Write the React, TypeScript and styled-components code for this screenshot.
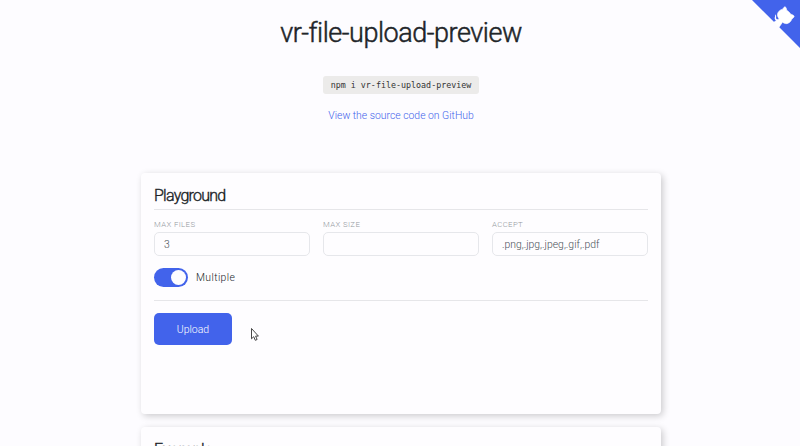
import React, { useState } from "react";
import styled, { createGlobalStyle } from "styled-components";

const GlobalStyle = createGlobalStyle`
  * { box-sizing: border-box; }
  html { height: 100%; overflow: hidden; }
  body {
    margin: 0;
    height: 100%;
    overflow: hidden;
    background: #fdfcff;
    color: #212529;
    font-family: Roboto, "Liberation Sans", sans-serif;
    font-weight: 300;
  }
`;

const Page = styled.div`
  height: 446px;
  overflow: hidden;
  display: flex;
  flex-direction: column;
  align-items: center;
  padding-left: 2px;
`;

const Title = styled.h1`
  margin: 16px 0 0;
  font-size: 27px;
  line-height: 34px;
  font-weight: 300;
  letter-spacing: -0.46px;
  -webkit-text-stroke: 0.5px #212529;
`;

const Command = styled.code`
  margin-top: 26px;
  width: 156px;
  height: 18px;
  border-radius: 3px;
  background: #ecebea;
  color: #333;
  font: 400 8.35px/18px "DejaVu Sans Mono", monospace;
  text-align: center;
  white-space: nowrap;
`;

const SourceLink = styled.a`
  margin-top: 14px;
  font-size: 10.4px;
  line-height: 16px;
  color: #4263eb;
  text-decoration: none;
`;

const Cards = styled.main`
  margin-top: 49px;
`;

const Card = styled.section`
  width: 520px;
  height: 241px;
  padding: 13px;
  border-radius: 4px;
  background: #fefdff;
  box-shadow: 2px 2px 7px rgba(0, 0, 0, 0.2);

  & + & { margin-top: 13px; }
`;

const CardTitle = styled.h2<{ $tracking: number }>`
  margin: 0;
  height: 24px;
  border-bottom: 1px solid #e6e6e9;
  font-size: 16px;
  line-height: 20px;
  font-weight: 300;
  letter-spacing: ${({ $tracking }) => $tracking}px;
  -webkit-text-stroke: 0.4px #212529;
`;

const Fields = styled.div`
  display: grid;
  grid-template-columns: repeat(3, 156px);
  gap: 13px;
  margin-top: 9px;
`;

const Field = styled.label`
  display: flex;
  flex-direction: column;
`;

const FieldLabel = styled.span`
  height: 13px;
  font-size: 7.8px;
  line-height: 12px;
  letter-spacing: 0.38px;
  color: #949aa0;
`;

const Input = styled.input`
  width: 100%;
  height: 24px;
  padding: 0 9px;
  border: 1px solid #e6e7eb;
  border-radius: 5px;
  outline: none;
  background: transparent;
  color: #495057;
  font: 300 10.4px Roboto, "Liberation Sans", sans-serif;
`;

const SwitchRow = styled.div`
  display: flex;
  align-items: center;
  gap: 8px;
  height: 19px;
  margin-top: 12px;
  font-size: 10.4px;
  letter-spacing: 0.38px;
`;

const Switch = styled.button<{ $on: boolean }>`
  display: flex;
  align-items: center;
  justify-content: ${({ $on }) => ($on ? "flex-end" : "flex-start")};
  width: 34px;
  height: 19px;
  padding: 0 2px;
  border: 0;
  border-radius: 10px;
  background: ${({ $on }) => ($on ? "#4263eb" : "#ced4da")};
`;

const SwitchText = styled.span`
  line-height: 17px;
`;

const Knob = styled.span`
  width: 15px;
  height: 15px;
  border-radius: 50%;
  background: #fefdff;
`;

const Divider = styled.hr`
  height: 1px;
  margin: 13px 0 12px;
  border: 0;
  background: #e6e6e9;
`;

const UploadButton = styled.button`
  display: block;
  width: 78px;
  height: 32px;
  padding: 0;
  border: 0;
  border-radius: 5px;
  background: #4263eb;
  color: #fff;
  font: 300 10.5px Roboto, "Liberation Sans", sans-serif;
`;

const Corner = styled.a`
  position: absolute;
  top: 0;
  right: 0;
  line-height: 0;
`;

const Cursor = styled.svg`
  position: absolute;
  left: 250px;
  top: 327px;
`;

const GithubCorner = () => (
  <Corner href="#" aria-label="View source on GitHub">
    <svg width="48" height="48" viewBox="0 0 250 250" fill="#4263eb">
      <path d="M0,0 L115,115 L130,115 L142,142 L250,250 L250,0 Z" />
      <path
        d="M128.3,109.0 C113.8,99.7 119.0,89.6 119.0,89.6 C122.0,82.7 120.5,78.6 120.5,78.6 C119.2,72.0 123.4,76.3 123.4,76.3 C127.3,80.9 125.5,87.3 125.5,87.3 C122.9,97.6 130.6,101.9 134.4,103.2"
        fill="#fff"
      />
      <path
        d="M115,115 L133.7,101.6 C136.9,99.2 139.9,98.4 142.2,98.6 C132,86 127.5,72 141,58 C147,52 154,49 160,48 C162,42 167,36 173,35 C178,39 180,46 181,53 C188,57 197,66 202,74 C210,76 217,80 220,84 C217,92 212,97 207,99 C206,105 203,110 198.3,114 C182,129 168.3,123 157.7,114.1 C157.9,116.9 156.7,120.9 152.7,124.9 L141,141.8 Z"
        fill="#fff"
        stroke="#fff"
        strokeWidth="3"
        strokeLinejoin="round"
      />
    </svg>
  </Corner>
);

export default function App() {
  const [multiple, setMultiple] = useState(true);

  return (
    <>
      <GlobalStyle />
      <Page>
        <Title>vr-file-upload-preview</Title>
        <Command>npm i vr-file-upload-preview</Command>
        <SourceLink href="#">View the source code on GitHub</SourceLink>
        <Cards>
          <Card>
            <CardTitle $tracking={-0.75}>Playground</CardTitle>
            <Fields>
              <Field>
                <FieldLabel>MAX FILES</FieldLabel>
                <Input defaultValue="3" />
              </Field>
              <Field>
                <FieldLabel>MAX SIZE</FieldLabel>
                <Input />
              </Field>
              <Field>
                <FieldLabel>ACCEPT</FieldLabel>
                <Input defaultValue=".png,.jpg,.jpeg,.gif,.pdf" />
              </Field>
            </Fields>
            <SwitchRow>
              <Switch
                $on={multiple}
                role="switch"
                aria-checked={multiple}
                aria-label="Multiple"
                onClick={() => setMultiple(!multiple)}
              >
                <Knob />
              </Switch>
              <SwitchText>Multiple</SwitchText>
            </SwitchRow>
            <Divider />
            <UploadButton>Upload</UploadButton>
          </Card>
          <Card>
            <CardTitle $tracking={-0.3}>Example</CardTitle>
          </Card>
        </Cards>
      </Page>
      <GithubCorner />
      <Cursor width="9" height="14" viewBox="0 0 9 14" aria-hidden="true">
        <path
          d="M1.5 1.5V11.8L3.7 9.7L5.3 13.3L7.1 12.5L5.6 9.1H8.4Z"
          fill="#fff"
          stroke="#333"
          strokeWidth="0.9"
        />
      </Cursor>
    </>
  );
}
